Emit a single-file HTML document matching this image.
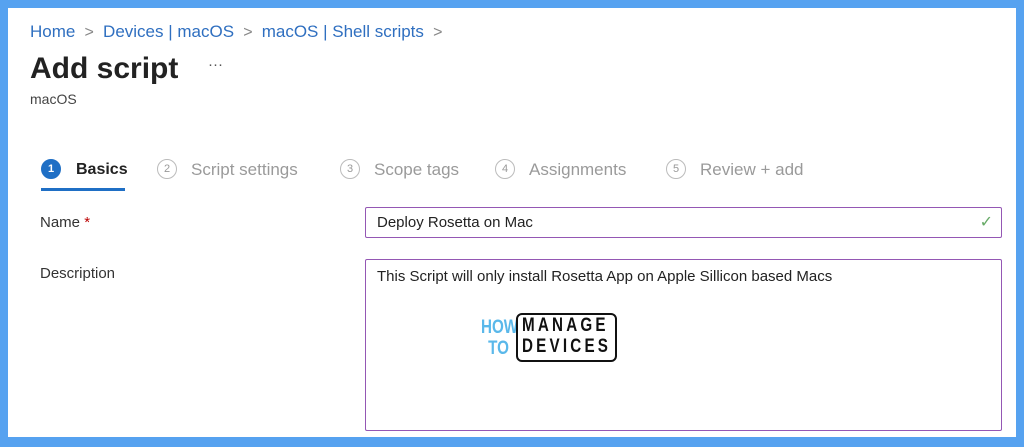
<!DOCTYPE html>
<html><head><meta charset="utf-8"><style>
body{margin:0;width:1024px;height:447px;overflow:hidden;background:#56a2f0;font-family:"Liberation Sans",sans-serif}
#p{position:absolute;left:8px;top:8px;width:1008px;height:429px;background:#fff}
.a{position:absolute;white-space:nowrap}
.bc{color:#2f6fc0;font-size:17px;top:14px}
.gt{color:#888;font-size:16px}
.st{font-size:17px;color:#9a9a9a;top:152px}
.c{position:absolute;top:151px;width:20px;height:20px;border:1.5px solid #bbb;border-radius:50%;box-sizing:border-box;font-size:11px;color:#999;display:flex;align-items:center;justify-content:center}
.box{position:absolute;border:1.5px solid #9457b4;box-sizing:border-box;border-radius:2px}
.lg{font-family:"Liberation Sans Narrow","Liberation Sans",sans-serif;font-weight:bold}
</style></head><body><div id="p">
<div class="a bc" style="left:22px">Home <span class="gt">&nbsp;&gt;&nbsp;</span> Devices | macOS <span class="gt">&nbsp;&gt;&nbsp;</span> macOS | Shell scripts <span class="gt">&nbsp;&gt;</span></div>
<div class="a" style="left:22px;top:44px;font-size:30px;font-weight:bold;color:#222">Add script</div>
<div class="a" style="left:200px;top:48px;font-size:15px;color:#555">···</div>
<div class="a" style="left:22px;top:83px;font-size:14px;color:#444">macOS</div>
<div class="c" style="left:33px;background:#1f6fc5;border-color:#1f6fc5;color:#fff;font-weight:bold">1</div>
<div class="a st" style="left:68px;color:#222;font-weight:bold;font-size:16px;top:153px">Basics</div>
<div class="a" style="left:33px;top:180px;width:84px;height:3px;background:#1f6fc5"></div>
<div class="c" style="left:149px">2</div><div class="a st" style="left:183px">Script settings</div>
<div class="c" style="left:332px">3</div><div class="a st" style="left:366px">Scope tags</div>
<div class="c" style="left:487px">4</div><div class="a st" style="left:521px">Assignments</div>
<div class="c" style="left:658px">5</div><div class="a st" style="left:692px">Review + add</div>
<div class="a" style="left:32px;top:206px;font-size:15px;color:#333">Name <span style="color:#b00">*</span></div>
<div class="a" style="left:32px;top:257px;font-size:15px;color:#333">Description</div>
<div class="box" style="left:357px;top:199px;width:637px;height:31px"><span class="a" style="left:11px;top:6px;font-size:15px;color:#222">Deploy Rosetta on Mac</span><span class="a" style="right:8px;top:4px;font-size:16px;color:#6a6">✓</span></div>
<div class="box" style="left:357px;top:251px;width:637px;height:172px"><span class="a" style="left:11px;top:8px;font-size:15px;color:#222">This Script will only install Rosetta App on Apple Sillicon based Macs</span></div>
<div class="a lg" style="left:466px;top:309px;font-size:19px;line-height:21px;color:#5ab8ea;text-align:right;width:35px;transform:scaleX(0.8);transform-origin:right">HOW<br>TO</div>
<div class="a" style="left:508px;top:305px;width:101px;height:49px;border:2.5px solid #111;border-radius:6px;box-sizing:border-box"></div>
<div class="a lg" style="left:514px;top:307px;font-size:19px;line-height:21px;color:#111;letter-spacing:4px;transform:scaleX(0.8);transform-origin:left">MANAGE<br>DEVICES</div>
</div></body></html>
